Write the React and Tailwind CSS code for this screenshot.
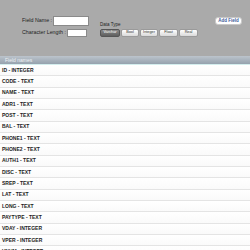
import React from "react";

const rows = [
  "ID - INTEGER",
  "CODE - TEXT",
  "NAME - TEXT",
  "ADR1 - TEXT",
  "POST - TEXT",
  "BAL - TEXT",
  "PHONE1 - TEXT",
  "PHONE2 - TEXT",
  "AUTH1 - TEXT",
  "DISC - TEXT",
  "SREP - TEXT",
  "LAT - TEXT",
  "LONG - TEXT",
  "PAYTYPE - TEXT",
  "VDAY - INTEGER",
  "VPER - INTEGER",
  "VNUM - INTEGER",
];

const types = [
  { name: "Varchar", w: "w-[20px]", active: true },
  { name: "Bool", w: "w-[18px]" },
  { name: "Integer", w: "w-[18px]" },
  { name: "Float", w: "w-[19px]" },
  { name: "Real", w: "w-[19px]" },
];

export default function App() {
  return (
    <div
      className="w-[250px] h-[250px] overflow-hidden bg-white flex flex-col"
      style={{ fontFamily: '"Liberation Sans", Arial, sans-serif' }}
    >
      <div className="h-[56px] shrink-0 bg-[#aaaaaa] flex">
        <div className="pl-[22px] pt-[16px] flex flex-col gap-[3px]">
          <div className="flex items-center gap-[1px] h-[10px]">
            <span className="text-[5.3px] leading-none text-[#222]">Field Name :</span>
            <div className="w-[36px] h-[10px] bg-white border border-[#8a8a8a]" />
          </div>
          <div className="flex items-center gap-[1px] h-[8px]">
            <span className="text-[5.3px] leading-none text-[#222]">Character Length :</span>
            <div className="w-[20px] h-[8px] bg-white border border-[#8a8a8a]" />
          </div>
        </div>
        <div className="ml-[11px] pt-[22px] flex flex-col">
          <span className="text-[4.5px] leading-[5px] text-[#222]">Data Type</span>
          <div className="mt-[2px] flex gap-[1px]">
            {types.map((t) => (
              <div
                key={t.name}
                className={`${t.w} h-[8px] flex items-center justify-center rounded-[2px] border text-[3.8px] leading-none ${
                  t.active
                    ? "bg-gradient-to-b from-[#8a8a8a] to-[#5e5e5e] border-[#555] text-white"
                    : "bg-gradient-to-b from-white to-[#d9d9d9] border-[#9a9a9a] text-[#333]"
                }`}
              >
                {t.name}
              </div>
            ))}
          </div>
        </div>
        <div className="ml-auto mr-[8px] pt-[17px]">
          <div className="w-[27px] h-[8px] bg-white rounded-[3px] border border-[#c8c8c8] flex items-center justify-center text-[4.5px] font-bold leading-none text-[#3d5a99]">
            Add Field
          </div>
        </div>
      </div>
      <div className="h-[8px] shrink-0 bg-gradient-to-b from-[#bcc4cc] to-[#96a2ae] flex items-center pl-[5px]">
        <span className="text-[5px] leading-none text-[#eef2f5]">Field names</span>
      </div>
      <div className="h-[1px] shrink-0 bg-[#d4eeee]" />
      <div className="flex flex-col">
        {rows.map((r) => (
          <div
            key={r}
            className="h-[11.33px] shrink-0 flex items-center pl-[2px] bg-gradient-to-b from-white to-[#fafafa] border-b border-[#e4e4e4]"
          >
            <span className="text-[5px] font-bold leading-none text-[#222]">{r}</span>
          </div>
        ))}
      </div>
    </div>
  );
}
